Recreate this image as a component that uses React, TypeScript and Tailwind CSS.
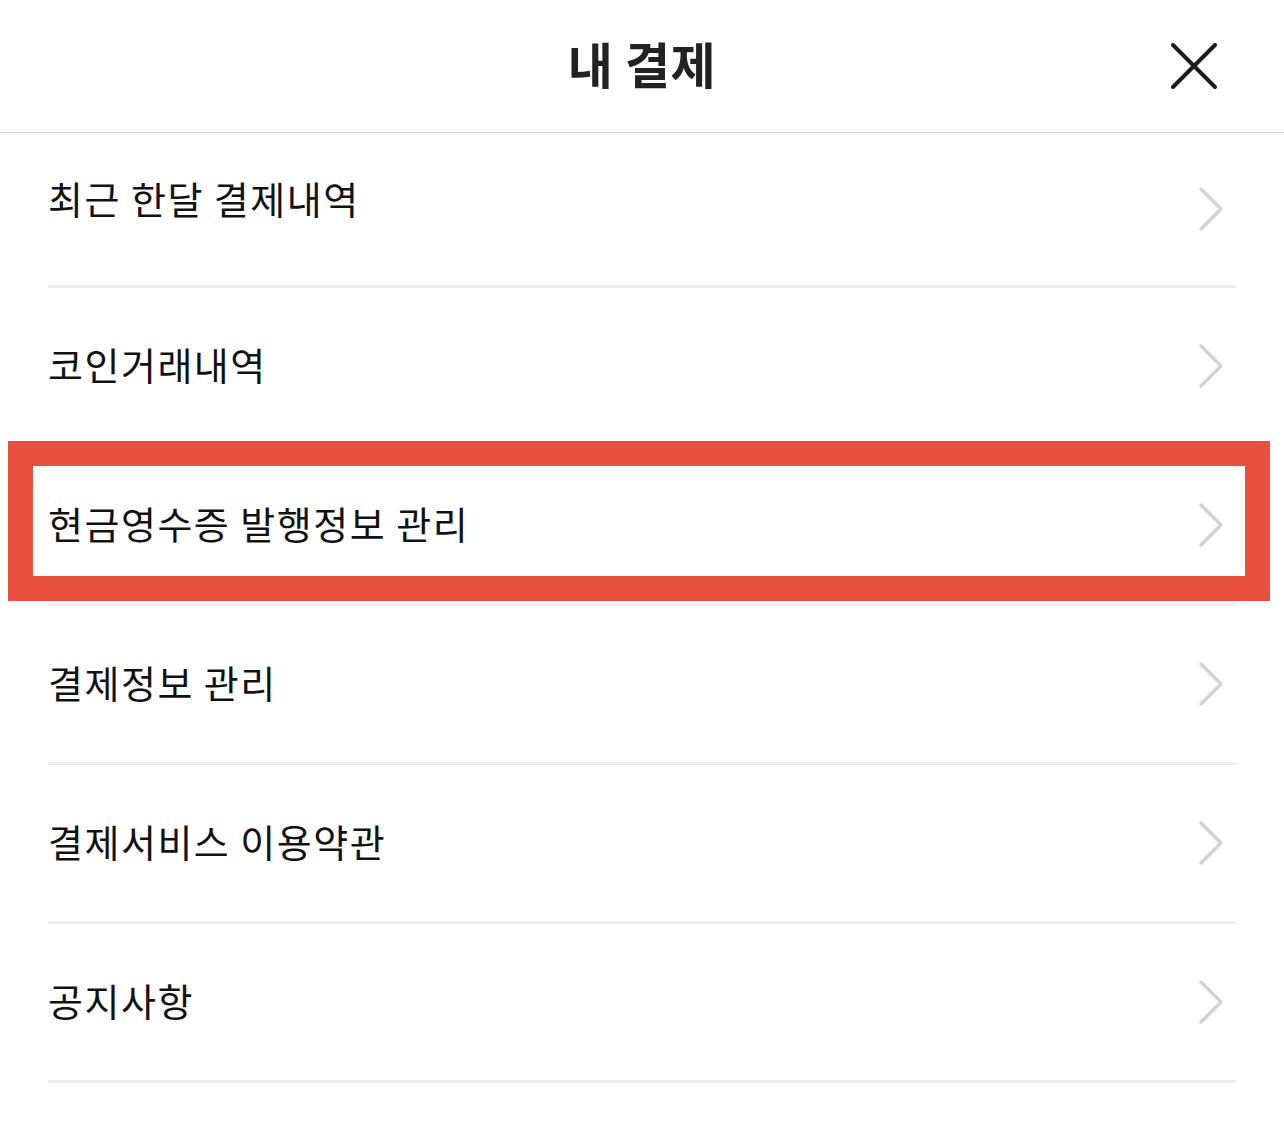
const ITEMS = [
  '최근 한달 결제내역',
  '코인거래내역',
  '현금영수증 발행정보 관리',
  '결제정보 관리',
  '결제서비스 이용약관',
  '공지사항',
]

const FONT = { fontFamily: '"Noto Sans CJK KR", "Noto Sans", sans-serif' }

function Chevron() {
  return (
    <svg width="28" height="48" viewBox="0 0 28 48" className="mr-[11px] shrink-0" fill="none">
      <path d="M4 4 L24 24 L4 44" stroke="#d4d4d4" strokeWidth="3.5" strokeLinecap="round" strokeLinejoin="round" />
    </svg>
  )
}

function CloseIcon() {
  return (
    <svg width="46" height="46" viewBox="0 0 46 46" fill="none">
      <path d="M2 2 L44 44 M44 2 L2 44" stroke="#1c1c1c" strokeWidth="4" strokeLinecap="round" />
    </svg>
  )
}

function MenuRow({ label, first }: { label: string; first: boolean }) {
  return (
    <div
      className={`flex items-center justify-between border-b-[3px] border-[#eeeeee] ${first ? 'h-[155px]' : 'h-[159px]'}`}
    >
      <span className={`text-[38px] tracking-[1.5px] text-[#111111] ${first ? 'mb-[24px]' : 'mb-[6px]'}`}>{label}</span>
      <Chevron />
    </div>
  )
}

export default function App() {
  return (
    <div className="relative min-h-[1129px] w-full bg-white" style={FONT}>
      <header className="grid h-[133px] grid-cols-[1fr_auto_1fr] items-center border-b border-[#d8d8d8]">
        <div />
        <h1 className="mb-[6px] text-[49px] font-bold tracking-[0.5px] text-[#222222]">내 결제</h1>
        <div className="flex justify-end pr-[67px]">
          <CloseIcon />
        </div>
      </header>

      <div className="px-[48px]">
        {ITEMS.map((label, i) => (
          <MenuRow key={label} label={label} first={i === 0} />
        ))}
      </div>

      {/* highlight annotation */}
      <div className="pointer-events-none absolute left-[8px] top-[441px] h-[160px] w-[1262px] border-[25px] border-[#e8503f]" />
    </div>
  )
}
